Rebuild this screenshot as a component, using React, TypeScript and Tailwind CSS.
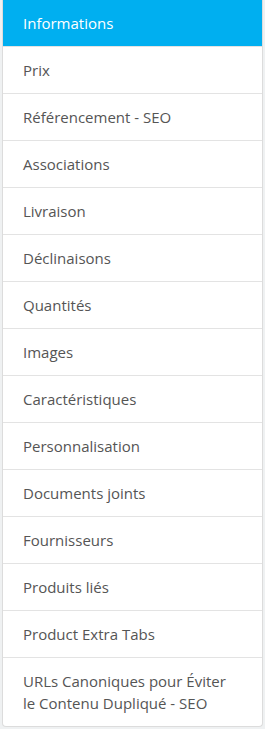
const tabs = [
  'Informations',
  'Prix',
  'Référencement - SEO',
  'Associations',
  'Livraison',
  'Déclinaisons',
  'Quantités',
  'Images',
  'Caractéristiques',
  'Personnalisation',
  'Documents joints',
  'Fournisseurs',
  'Produits liés',
  'Product Extra Tabs',
  'URLs Canoniques pour Éviter le Contenu Dupliqué - SEO',
];

export default function App() {
  return (
    <div className="min-h-screen w-full bg-[#eff1f2] px-[2px] font-['Open_Sans',sans-serif]">
      <div className="border border-t-0 border-[#dcdcdc] rounded-b bg-white">
        {tabs.map((tab, i) => (
          <div
            key={tab}
            className={
              i === 0
                ? 'bg-[#00aff0] text-white text-[15px] leading-[22px] px-5 py-3'
                : 'border-t border-[#e3e3e3] text-[#555] text-[15px] leading-[22px] pl-5 pr-8 py-3'
            }
          >
            {tab}
          </div>
        ))}
      </div>
    </div>
  );
}
